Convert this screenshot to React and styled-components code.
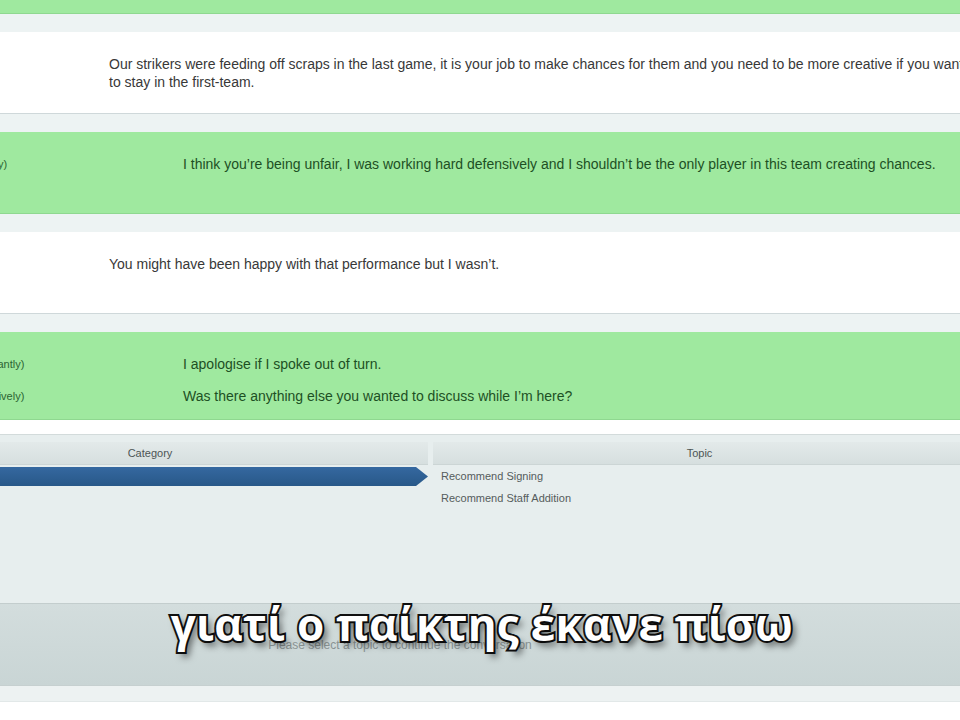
import styled, { createGlobalStyle } from 'styled-components';

const GlobalStyle = createGlobalStyle`
  html, body {
    margin: 0;
    padding: 0;
    width: 960px;
    height: 720px;
    overflow: hidden;
    background: #ffffff;
    font-family: "Liberation Sans", Arial, sans-serif;
  }
`;

const Screen = styled.div`
  position: relative;
  width: 960px;
  height: 720px;
  overflow: hidden;
  background: #ffffff;
`;

const Page = styled.div`
  width: 1080px;
  margin-left: -60px;
  margin-top: -68px;
  display: flex;
  flex-direction: column;
`;

const Conversation = styled.div`
  display: flex;
  flex-direction: column;
  gap: 18px;
  background: #edf3f3;
`;

const Row = styled.div`
  box-sizing: border-box;
  min-height: ${p => p.$tall ? 84 : 82}px;
  padding: 23px 40px 14px ${p => p.$speaker === 'manager' ? 169 : 0}px;
  background: ${p => p.$speaker === 'manager' ? '#ffffff' : '#9fe99f'};
  border-bottom: 1px solid ${p => p.$speaker === 'manager' ? '#cfd8da' : '#8fd890'};
  display: flex;
  flex-direction: column;
  gap: 14px;
`;

const ManagerText = styled.p`
  margin: 0;
  font-size: 14px;
  line-height: 18px;
  color: #383838;
  max-width: 868px;
`;

const Response = styled.div`
  display: grid;
  grid-template-columns: 243px 1fr;
  align-items: center;
  line-height: 18px;
`;

const Tone = styled.span`
  padding-left: 11px;
  font-size: 11px;
  color: #2c6433;
`;

const ResponseText = styled.span`
  font-size: 14px;
  color: #1d5024;
`;

const Panel = styled.div`
  margin-top: 14px;
  border-top: 1px solid #d3dbdb;
  background: #e7eeee;
  padding-top: 7px;
  height: 169px;
  box-sizing: border-box;
  display: grid;
  grid-template-columns: 488px 1fr;
  column-gap: 5px;
  align-content: start;
`;

const Column = styled.div`
  display: flex;
  flex-direction: column;
`;

const ColumnHeader = styled.div`
  height: 22px;
  line-height: 22px;
  text-align: center;
  padding-right: ${p => p.$shift || 0}px;
  font-size: 11px;
  color: #4d5555;
  background: linear-gradient(#e3eaea, #d6dfdf);
  border-bottom: 1px solid #ccd5d5;
`;

const Item = styled.div`
  height: 22px;
  line-height: 22px;
  font-size: 11px;
  color: #555c5c;
  padding-left: 8px;
`;

const SelectedBar = styled.div`
  height: 19px;
  margin: 2px 0 1px;
  background: linear-gradient(#3568a0, #285888);
  clip-path: polygon(0 0, 476px 0, 488px 50%, 476px 100%, 0 100%);
`;

const BottomBar = styled.div`
  height: 83px;
  box-sizing: border-box;
  border-top: 1px solid #c3cdcd;
  border-bottom: 1px solid #c6d0d0;
  background: linear-gradient(#d3dddd, #c9d5d5);
  display: flex;
  align-items: center;
  justify-content: center;
  padding-right: 160px;
  font-size: 12px;
  color: #8a9494;
`;

const Strip = styled.div`
  height: 15px;
  background: #edf2f2;
  border-bottom: 1px solid #e2e8e8;
`;

const Subtitle = styled.div`
  position: absolute;
  left: 0;
  right: 0;
  top: 594px;
  text-align: center;
  padding-left: 4px;
  font-family: "Open Sans", "Noto Sans", "DejaVu Sans", sans-serif;
  font-weight: 700;
  font-size: 44px;
  letter-spacing: 0.3px;
  line-height: 60px;
  color: #ffffff;
  -webkit-text-stroke: 4px #111111;
  paint-order: stroke fill;
  text-shadow: 4px 5px 7px rgba(0, 0, 0, 0.55);
`;

const dialogue = [
  { speaker: 'player', lines: [{ tone: '(Calmly)', text: 'I gave everything I had out there, boss.' }] },
  { speaker: 'manager', text: 'Our strikers were feeding off scraps in the last game, it is your job to make chances for them and you need to be more creative if you want to stay in the first-team.' },
  { speaker: 'player', lines: [{ tone: '(Unhappily)', text: 'I think you\u2019re being unfair, I was working hard defensively and I shouldn\u2019t be the only player in this team creating chances.' }] },
  { speaker: 'manager', text: 'You might have been happy with that performance but I wasn\u2019t.' },
  {
    speaker: 'player',
    tall: true,
    lines: [
      { tone: '(Insignificantly)', text: 'I apologise if I spoke out of turn.' },
      { tone: '(Competitively)', text: 'Was there anything else you wanted to discuss while I\u2019m here?' },
    ],
  },
];

const topics = ['Recommend Signing', 'Recommend Staff Addition'];

export default function App() {
  return (
    <Screen>
      <GlobalStyle />
      <Page>
        <Conversation>
          {dialogue.map((row, i) => (
            <Row key={i} $speaker={row.speaker} $tall={row.tall}>
              {row.speaker === 'manager' ? (
                <ManagerText>{row.text}</ManagerText>
              ) : (
                row.lines.map((line, j) => (
                  <Response key={j}>
                    <Tone>{line.tone}</Tone>
                    <ResponseText>{line.text}</ResponseText>
                  </Response>
                ))
              )}
            </Row>
          ))}
        </Conversation>

        <Panel>
          <Column>
            <ColumnHeader $shift={68}>Category</ColumnHeader>
            <SelectedBar />
          </Column>
          <Column>
            <ColumnHeader $shift={54}>Topic</ColumnHeader>
            {topics.map(t => (
              <Item key={t}>{t}</Item>
            ))}
          </Column>
        </Panel>

        <BottomBar>Please select a topic to continue the conversation</BottomBar>
        <Strip />
      </Page>
      <Subtitle>γιατί ο παίκτης έκανε πίσω</Subtitle>
    </Screen>
  );
}
